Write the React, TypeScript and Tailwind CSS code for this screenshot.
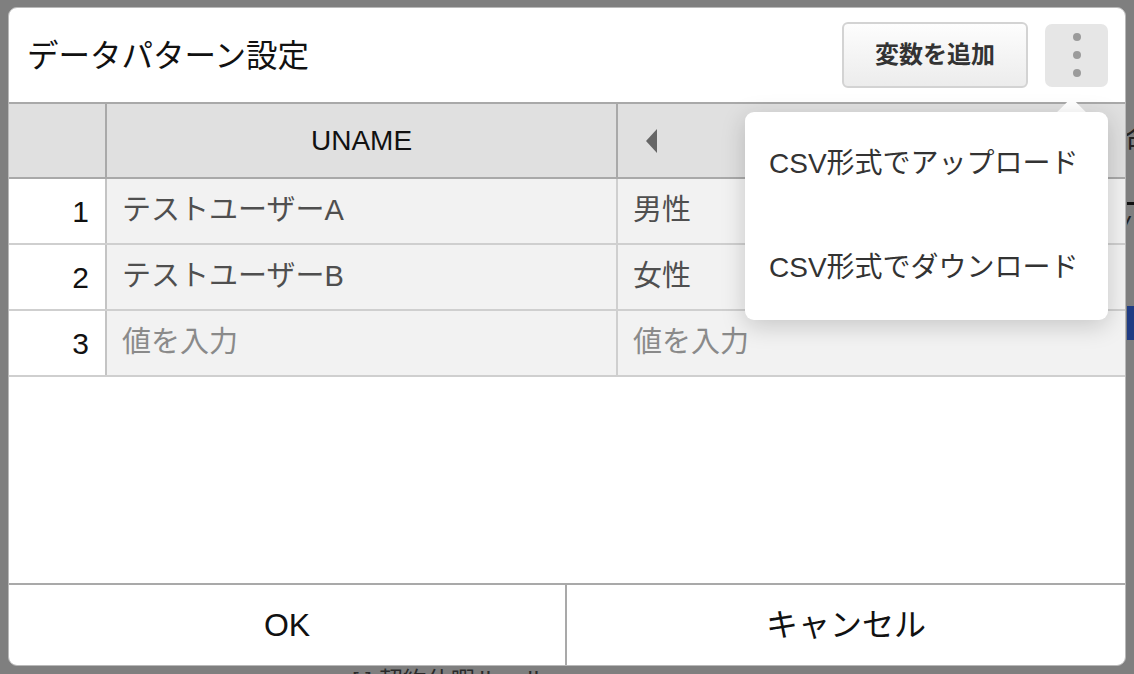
import React from "react";

const rows = [
  { n: 1, a: "テストユーザーA", b: "男性", ph: false },
  { n: 2, a: "テストユーザーB", b: "女性", ph: false },
  { n: 3, a: "値を入力", b: "値を入力", ph: true },
];

export default function App() {
  return (
    <div className="relative w-[1134px] h-[674px] overflow-hidden bg-[#7f7f7f] font-['Liberation_Sans','Noto_Sans_CJK_JP',sans-serif]">
      {/* background page (dimmed) */}
      <div className="flex h-full">
        <div className="flex-1 flex flex-col justify-end pl-[352px]">
          <div className="h-[10px] overflow-hidden text-[24px] leading-[34px] text-[#2a2a2a]">[ ] 契約休暇ルール</div>
        </div>
        <div className="w-[7px] flex flex-col pt-[122px] overflow-hidden">
          <div className="text-[30px] leading-[34px] text-[#222] -ml-[2px]">命</div>
          <div className="mt-[46px] h-[3px] bg-[#111]" />
          <div className="mt-[8px] text-[28px] leading-[28px] italic text-[#222] -ml-[6px]">/</div>
          <div className="mt-[65px] h-[34px] bg-[#1f3c84]" />
        </div>
      </div>

      {/* modal */}
      <div className="absolute left-[8px] top-[7px] w-[1118px] h-[659px] bg-white rounded-[9px] border border-[#b9b9b9] flex flex-col overflow-hidden">
        {/* header */}
        <div className="h-[94px] flex items-center pl-[18px] pr-[17px] shrink-0">
          <div className="text-[31.5px] text-[#111] flex-1 pt-[3px]">データパターン設定</div>
          <button className="w-[186px] h-[66px] rounded-[6px] border-2 border-[#d3d3d3] bg-gradient-to-b from-[#fdfdfd] to-[#ececec] text-[24px] font-bold text-[#333]">
            変数を追加
          </button>
          <div className="relative ml-[17px]">
            <div className="w-[63px] h-[63px] rounded-[7px] bg-[#e6e6e6] flex flex-col items-center justify-center gap-[10px]">
              <span className="w-[8px] h-[8px] rounded-full bg-[#9b9b9b]" />
              <span className="w-[8px] h-[8px] rounded-full bg-[#9b9b9b]" />
              <span className="w-[8px] h-[8px] rounded-full bg-[#9b9b9b]" />
            </div>
            {/* dropdown */}
            <div className="absolute right-0 top-[88px] w-[363px] z-10">
              <div className="absolute -top-[10px] right-[26px] w-[21px] h-[21px] rotate-45 bg-white" />
              <div className="relative bg-white rounded-[9px] shadow-[0_6px_24px_rgba(0,0,0,0.18)] text-[28px] text-[#333]">
                <div className="h-[104px] flex items-center pl-[24px]">CSV形式でアップロード</div>
                <div className="h-[104px] flex items-center pl-[24px]">CSV形式でダウンロード</div>
              </div>
            </div>
          </div>
        </div>

        {/* table */}
        <div className="flex-1 overflow-hidden">
          <div className="flex h-[77px] bg-[#e0e0e0] border-y-2 border-[#a9a9a9]">
            <div className="w-[98px] shrink-0 border-r-2 border-[#a9a9a9]" />
            <div className="w-[511px] shrink-0 border-r-2 border-[#a9a9a9] flex items-center justify-center text-[28px] text-[#111]">
              UNAME
            </div>
            <div className="flex-1 flex items-center pl-[28px]">
              <svg width="12" height="24" viewBox="0 0 12 24">
                <polygon points="11,0 11,24 0,12" fill="#666" />
              </svg>
            </div>
          </div>
          {rows.map((r) => (
            <div key={r.n} className="flex h-[66px] border-b-2 border-[#cfcfcf]">
              <div className="w-[98px] shrink-0 border-r-2 border-[#c4c4c4] bg-white flex items-center justify-end pr-[16px] text-[30px] text-[#111]">
                {r.n}
              </div>
              <div
                className={
                  "w-[511px] shrink-0 border-r-2 border-[#cfcfcf] bg-[#f2f2f2] flex items-center pl-[15px] text-[29px] " +
                  (r.ph ? "text-[#8a8a8a]" : "text-[#4f4f4f]")
                }
              >
                {r.a}
              </div>
              <div
                className={
                  "flex-1 bg-[#f2f2f2] flex items-center pl-[15px] text-[29px] " +
                  (r.ph ? "text-[#8a8a8a]" : "text-[#4f4f4f]")
                }
              >
                {r.b}
              </div>
            </div>
          ))}
        </div>

        {/* footer */}
        <div className="h-[82px] shrink-0 flex border-t-2 border-[#a9a9a9] text-[32px] text-[#111]">
          <button className="w-[558px] border-r-2 border-[#a9a9a9] flex items-center justify-center">OK</button>
          <button className="flex-1 flex items-center justify-center">キャンセル</button>
        </div>
      </div>
    </div>
  );
}
